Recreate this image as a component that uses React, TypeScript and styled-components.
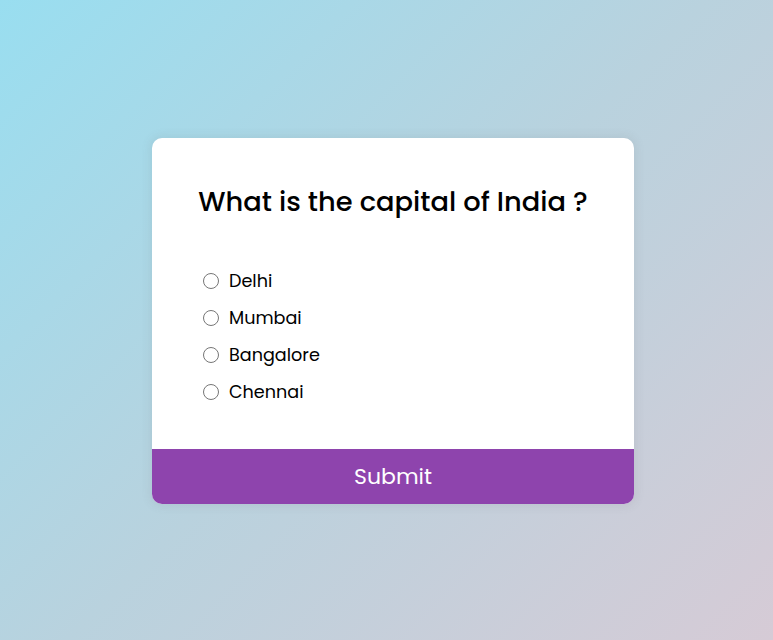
import React from "react";
import styled, { createGlobalStyle } from "styled-components";

const GlobalStyle = createGlobalStyle`
  * { box-sizing: border-box; }
  html, body { margin: 0; padding: 0; }
  body {
    font-family: "Poppins", "Inter", "Open Sans", sans-serif;
    min-height: 100vh;
    background: linear-gradient(135deg, #99def0 0%, #b9d2de 50%, #d6cbd6 100%);
  }
`;

const Page = styled.div`
  width: 773px;
  height: 640px;
  display: flex;
  align-items: center;
  justify-content: center;
  padding-left: 13px;
  padding-top: 2px;
`;

const Card = styled.div`
  width: 482px;
  height: 366px;
  background: #fff;
  border-radius: 10px;
  box-shadow: 0 0 10px 2px rgba(100, 100, 100, 0.1);
  overflow: hidden;
  display: flex;
  flex-direction: column;
`;

const Header = styled.div`
  flex: 1;
  padding: 45px 40px 0 40px;
`;

const Title = styled.h2`
  margin: 0 0 48px 0;
  text-align: center;
  white-space: nowrap;
  font-size: 27.3px;
  font-weight: 500;
  color: #000;
  line-height: 38px;
`;

const Options = styled.ul`
  list-style: none;
  margin: 0;
  padding: 0 0 0 8px;
  display: flex;
  flex-direction: column;
  gap: 13px;
`;

const Option = styled.li`
  display: flex;
  align-items: center;
  height: 24px;
  font-size: 17.6px;
  color: #000;
`;

const Radio = styled.input`
  width: 16px;
  height: 16px;
  margin: 0 10px 0 3px;
  accent-color: #8e44ad;
`;

const Label = styled.label`
  cursor: pointer;
`;

const SubmitButton = styled.button`
  display: block;
  width: 100%;
  height: 55px;
  border: none;
  background: #8e44ad;
  color: #fff;
  font-family: inherit;
  font-size: 22px;
  cursor: pointer;
`;

const options = ["Delhi", "Mumbai", "Bangalore", "Chennai"];

export default function App() {
  return (
    <>
      <GlobalStyle />
      <Page>
        <Card>
          <Header>
            <Title>What is the capital of India ?</Title>
            <Options>
              {options.map((o) => (
                <Option key={o}>
                  <Radio type="radio" name="answer" id={o} />
                  <Label htmlFor={o}>{o}</Label>
                </Option>
              ))}
            </Options>
          </Header>
          <SubmitButton>Submit</SubmitButton>
        </Card>
      </Page>
    </>
  );
}
